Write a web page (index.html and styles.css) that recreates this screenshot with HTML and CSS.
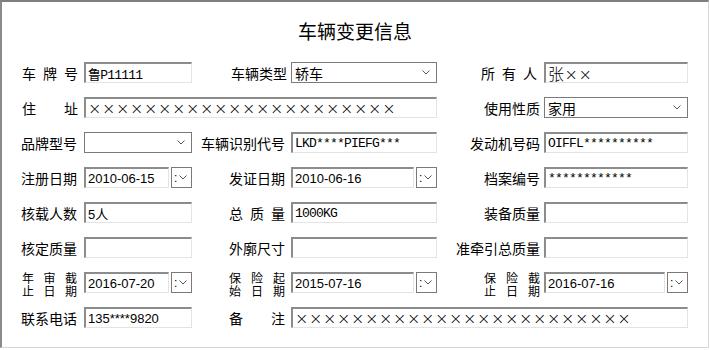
FILE: index.html
```html
<!DOCTYPE html>
<html lang="zh-CN">
<head>
    <meta charset="UTF-8">
    <title>车辆变更信息</title>
    <link rel="stylesheet" href="styles.css">
</head>
<body>
<div class="window">
    <h1 class="title">车辆变更信息</h1>

    <form class="form">
        <!-- row 1 -->
        <label class="lbl"><span class="sp">车 牌 号</span></label>
        <input class="txt mono" value="鲁P11111">
        <label class="lbl">车辆类型</label>
        <div class="select"><span>轿车</span><svg class="chev" viewBox="0 0 8 5"><polyline points="0.5,0.5 4,4 7.5,0.5"/></svg></div>
        <label class="lbl"><span class="sp">所 有 人</span></label>
        <input class="txt cross" value="张××">

        <!-- row 2 -->
        <label class="lbl"><span class="sp">住 址</span></label>
        <input class="txt cross wide-left" value="××××××××××××××××××××××">
        <label class="lbl">使用性质</label>
        <div class="select"><span>家用</span><svg class="chev" viewBox="0 0 8 5"><polyline points="0.5,0.5 4,4 7.5,0.5"/></svg></div>

        <!-- row 3 -->
        <label class="lbl">品牌型号</label>
        <div class="select"><span></span><svg class="chev" viewBox="0 0 8 5"><polyline points="0.5,0.5 4,4 7.5,0.5"/></svg></div>
        <label class="lbl">车辆识别代号</label>
        <input class="txt mono" value="LKD****PIEFG***">
        <label class="lbl">发动机号码</label>
        <input class="txt mono" value="OIFFL**********">

        <!-- row 4 -->
        <label class="lbl">注册日期</label>
        <div class="date"><input class="txt sans" value="2010-06-15"><span class="drop">:<svg class="chev" viewBox="0 0 8 5"><polyline points="0.5,0.5 4,4 7.5,0.5"/></svg></span></div>
        <label class="lbl">发证日期</label>
        <div class="date"><input class="txt sans" value="2010-06-16"><span class="drop">:<svg class="chev" viewBox="0 0 8 5"><polyline points="0.5,0.5 4,4 7.5,0.5"/></svg></span></div>
        <label class="lbl">档案编号</label>
        <input class="txt mono" value="************">

        <!-- row 5 -->
        <label class="lbl">核载人数</label>
        <input class="txt sans" value="5人">
        <label class="lbl"><span class="sp">总 质 量</span></label>
        <input class="txt mono" value="1000KG">
        <label class="lbl">装备质量</label>
        <input class="txt" value="">

        <!-- row 6 -->
        <label class="lbl">核定质量</label>
        <input class="txt" value="">
        <label class="lbl">外廓尺寸</label>
        <input class="txt" value="">
        <label class="lbl">准牵引总质量</label>
        <input class="txt" value="">

        <!-- row 7 -->
        <label class="lbl"><span class="sp two">年 审 截<br>止 日 期</span></label>
        <div class="date"><input class="txt sans" value="2016-07-20"><span class="drop">:<svg class="chev" viewBox="0 0 8 5"><polyline points="0.5,0.5 4,4 7.5,0.5"/></svg></span></div>
        <label class="lbl"><span class="sp two">保 险 起<br>始 日 期</span></label>
        <div class="date"><input class="txt sans" value="2015-07-16"><span class="drop">:<svg class="chev" viewBox="0 0 8 5"><polyline points="0.5,0.5 4,4 7.5,0.5"/></svg></span></div>
        <label class="lbl"><span class="sp two">保 险 截<br>止 日 期</span></label>
        <div class="date"><input class="txt sans" value="2016-07-16"><span class="drop">:<svg class="chev" viewBox="0 0 8 5"><polyline points="0.5,0.5 4,4 7.5,0.5"/></svg></span></div>

        <!-- row 8 -->
        <label class="lbl">联系电话</label>
        <input class="txt sans" value="135****9820">
        <label class="lbl"><span class="sp">备 注</span></label>
        <input class="txt cross wide-right" value="××××××××××××××××××××××××">
    </form>
</div>
</body>
</html>
```

FILE: styles.css
```css
* {
    margin: 0;
    padding: 0;
    box-sizing: border-box;
}

body {
    background: #fff;
    font-family: "Noto Sans CJK SC", "Liberation Sans", sans-serif;
    color: #000;
}

.window {
    width: 709px;
    height: 348px;
    border-top: 2px solid #7f7f7f;
    border-left: 2px solid #8a8a8a;
    border-right: 1px solid #d6d6d6;
    border-bottom: 1px solid #d6d6d6;
}

.title {
    padding-top: 17px;
    font-size: 19px;
    line-height: 24px;
    font-weight: normal;
    text-align: center;
}

.form {
    display: grid;
    grid-template-columns: 62px 108px 99px 146px 107px 144px;
    grid-auto-rows: 21px;
    row-gap: 14px;
    margin-top: 19px;
    padding-left: 20px;
}

.lbl {
    display: flex;
    align-items: center;
    justify-content: flex-end;
    padding-right: 6px;
    font-size: 14px;
    white-space: nowrap;
}

.lbl:nth-child(6n+3) {
    padding-right: 4px;
}

.lbl:nth-child(6n+5) {
    padding-right: 7px;
}

.sp {
    display: inline-block;
    width: 56px;
    text-align: justify;
    text-align-last: justify;
}

.sp.two {
    font-size: 12px;
    line-height: 13px;
    margin-top: 3px;
}

.txt {
    width: 100%;
    height: 21px;
    padding: 0 2px;
    border-style: solid;
    border-width: 2px 1px 1px 2px;
    border-color: #8c8c8c #e3e3e3 #e3e3e3 #8c8c8c;
    background: #fff;
    outline: none;
    font-family: "Noto Sans CJK SC", sans-serif;
    font-size: 14px;
    color: #000;
}

.mono {
    font-family: "Liberation Mono", "Noto Sans CJK SC", monospace;
    font-size: 13px;
    letter-spacing: -0.8px;
}

.sans {
    font-family: "Liberation Sans", "Noto Sans CJK SC", sans-serif;
    font-size: 13px;
}

.cross {
    font-family: "DejaVu Sans", "Noto Sans CJK SC", sans-serif;
    font-size: 16px;
    font-weight: 200;
    letter-spacing: 0.6px;
}

.wide-left {
    grid-column: 2 / 5;
}

.wide-right {
    grid-column: 4 / 7;
}

.select {
    display: flex;
    align-items: center;
    justify-content: space-between;
    height: 21px;
    padding: 0 6px 0 3px;
    border: 1px solid #7a7a7a;
    background: #fff;
    font-size: 14px;
}

.chev {
    width: 8px;
    height: 5px;
    fill: none;
    stroke: #555;
    stroke-width: 1;
}

.date {
    display: flex;
    gap: 2px;
}

.date .txt {
    flex: 1;
    min-width: 0;
}

.drop {
    flex: 0 0 21px;
    display: flex;
    align-items: center;
    gap: 2px;
    padding-left: 2px;
    border: 1px solid #7a7a7a;
    background: #fff;
    font-family: "Liberation Sans", sans-serif;
    font-size: 12px;
}

.drop .chev {
    width: 8px;
}
```
